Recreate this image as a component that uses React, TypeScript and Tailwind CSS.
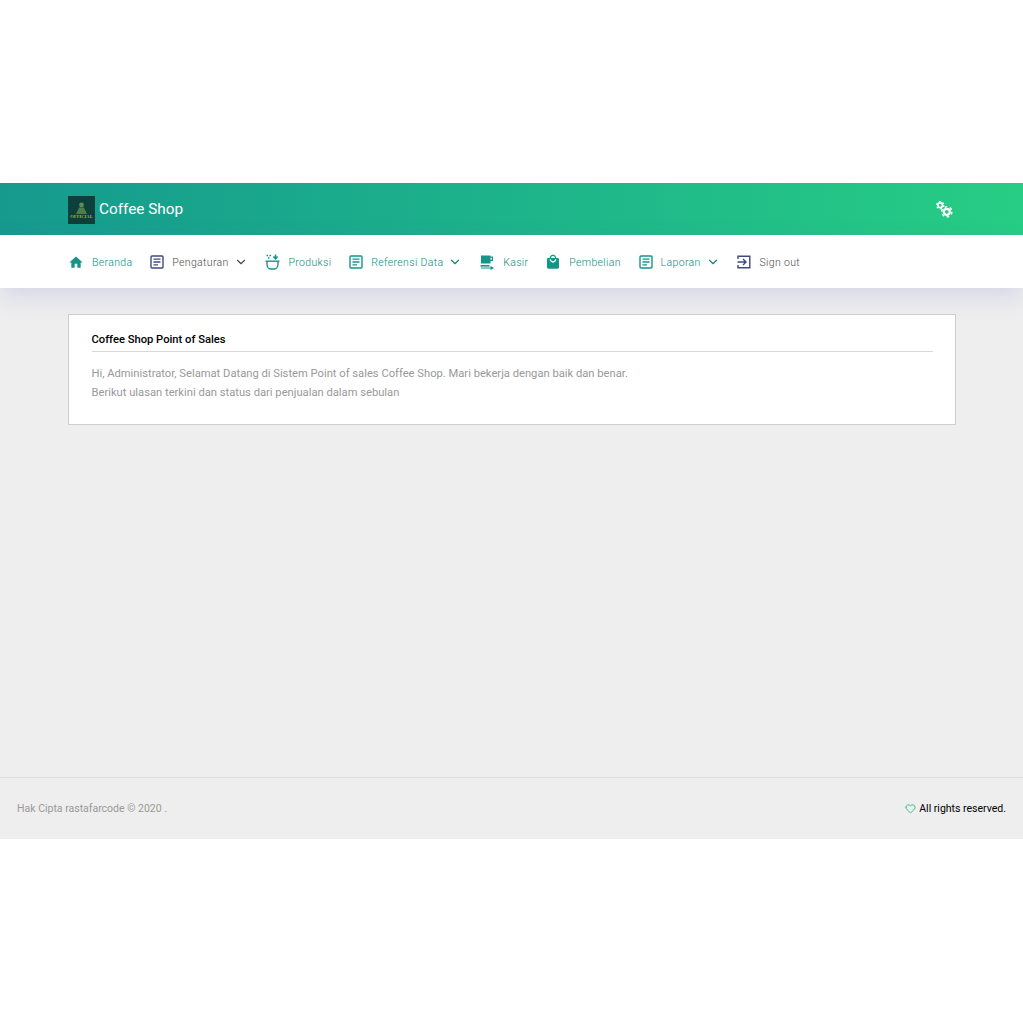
import type { ReactNode } from 'react';
import { ChevronDown, Heart } from 'lucide-react';
import { MdHome, MdLocalMall } from 'react-icons/md';

const TEAL = 'text-[#14958a]';
const NAVY = 'text-[#3f4a7d]';

function DocIcon({ className }: { className: string }) {
  return (
    <svg width="14" height="14" viewBox="0 0 14 14" fill="none" className={className}>
      <rect x="1" y="1" width="12" height="12" rx="1" stroke="currentColor" strokeWidth="1.4" />
      <path d="M3.5 4.2h7M3.5 7h7M3.5 9.8h4.5" stroke="currentColor" strokeWidth="1.3" />
    </svg>
  );
}

function BowlIcon() {
  return (
    <svg width="15" height="16" viewBox="0 0 15 16" fill="none" className={TEAL}>
      <path d="M1.5 1.5h1.5M4.5 1.5h1.5M3 4h1.5" stroke="currentColor" strokeWidth="1.3" />
      <path d="M10.5 0.5v3.2M8.4 2.6l2.1 2.2 2.1-2.2" stroke="currentColor" strokeWidth="1.5" />
      <path d="M0.5 7.2h14" stroke="currentColor" strokeWidth="1.4" />
      <path d="M2 7.5v2.5c0 2.8 1.6 5 3.5 5h4c1.9 0 3.5-2.2 3.5-5V7.5" stroke="currentColor" strokeWidth="1.4" />
    </svg>
  );
}

function CupIcon() {
  return (
    <svg width="15" height="15" viewBox="0 0 15 15" className={TEAL} fill="currentColor">
      <path d="M1 0.5h9.5v1h2.5v4.5h-2.5v2.5H1zM10.5 2.7v2.1h1.3V2.7z" />
      <path d="M0.5 10h9v1.6h-9z" />
      <path d="M1 12.6h9.5v-1.5l3.5 2-3.5 1.9v-1.4H1z" />
    </svg>
  );
}

function SignOutIcon() {
  return (
    <svg width="14" height="14" viewBox="0 0 14 14" fill="none" className={NAVY}>
      <path d="M1 4V1.2h11.8v11.6H1V10" stroke="currentColor" strokeWidth="1.4" />
      <path d="M0.5 7h8M6 4l3 3-3 3" stroke="currentColor" strokeWidth="1.4" />
    </svg>
  );
}

function GearsIcon() {
  return (
    <svg width="17" height="17" viewBox="0 0 17 17" fill="none" className="text-white">
      <circle cx="4.2" cy="4.2" r="2.3" stroke="currentColor" strokeWidth="1.6" />
      <circle cx="4.2" cy="4.2" r="3.6" stroke="currentColor" strokeWidth="1.3" strokeDasharray="1.9 1.9" />
      <circle cx="10.8" cy="10.8" r="3" stroke="currentColor" strokeWidth="2.2" />
      <circle cx="10.8" cy="10.8" r="5" stroke="currentColor" strokeWidth="1.6" strokeDasharray="2.6 2.6" />
    </svg>
  );
}

function NavItem({
  icon,
  label,
  color,
  caret,
  gap = 'gap-[7px]',
}: {
  icon: ReactNode;
  label: string;
  color: string;
  caret?: boolean;
  gap?: string;
}) {
  return (
    <a className={`flex items-center ${gap}`}>
      <span className="flex w-[16px] justify-center">{icon}</span>
      <span className={`pt-[1px] text-[10.5px] font-light tracking-[0.35px] ${color}`}>{label}</span>
      {caret && <ChevronDown size={14} strokeWidth={2} className={`ml-[-2px] ${color}`} />}
    </a>
  );
}

export default function App() {
  return (
    <div className="min-h-[1023px] bg-white font-['Roboto',sans-serif]">
      <div className="h-[183px]" />

      <header className="flex h-[52px] items-center justify-between bg-gradient-to-r from-[#169a8e] to-[#27cd84] pl-[68px] pr-[70px] pt-[1px]">
        <div className="flex items-center gap-[4px]">
          <svg width="27" height="28" viewBox="0 0 27 28">
            <rect width="27" height="28" fill="#0d3f3c" />
            <circle cx="13.5" cy="9" r="2.4" fill="#5d8a55" />
            <path d="M8 18l3-6.5h5l3 6.5z" fill="#4e7d4b" />
            <text x="13.5" y="22" textAnchor="middle" fontSize="4.6" fontWeight="700" fill="#a9b422" fontFamily="'Liberation Serif', serif">
              OFFICIAL
            </text>
          </svg>
          <span className="text-[15.3px] text-white">Coffee Shop</span>
        </div>
        <GearsIcon />
      </header>

      <nav className="relative flex h-[53px] items-center gap-[16.75px] bg-white pl-[68px] pt-[1px] shadow-[0_8px_24px_rgba(90,90,190,0.16)]">
        <NavItem icon={<MdHome size={17} className={TEAL} />} label="Beranda" color="text-[#0f8a80]" gap="gap-[8px]" />
        <NavItem icon={<DocIcon className={NAVY} />} label="Pengaturan" color="text-[#4a4a4a]" caret />
        <NavItem icon={<BowlIcon />} label="Produksi" color="text-[#0f8a80]" gap="gap-[8px]" />
        <NavItem icon={<DocIcon className={TEAL} />} label="Referensi Data" color="text-[#0f8a80]" caret />
        <NavItem icon={<CupIcon />} label="Kasir" color="text-[#0f8a80]" gap="gap-[8px]" />
        <NavItem icon={<MdLocalMall size={16} className={TEAL} />} label="Pembelian" color="text-[#0f8a80]" gap="gap-[8px]" />
        <NavItem icon={<DocIcon className={TEAL} />} label="Laporan" color="text-[#0f8a80]" caret />
        <NavItem icon={<SignOutIcon />} label="Sign out" color="text-[#4a4a4a]" />
      </nav>

      <main className="h-[489px] bg-[#eeeeee] px-[68px] pt-[26px]">
        <section className="h-[111px] w-[888px] border border-[#cfcfcf] bg-white px-[22.5px] pt-[17px]">
          <h4 className="border-b border-[#d8d8d8] pb-[4px] text-[11.2px] font-medium leading-[15px] text-black">
            Coffee Shop Point of Sales
          </h4>
          <p className="mt-[12px] text-[11.2px] leading-[19px] text-[#999999]">
            Hi, Administrator, Selamat Datang di Sistem Point of sales Coffee Shop. Mari bekerja dengan baik dan benar.
            <br />
            Berikut ulasan terkini dan status dari penjualan dalam sebulan
          </p>
        </section>
      </main>

      <footer className="flex h-[62px] items-center justify-between border-t border-[#dcdcdc] bg-[#eeeeee] px-[17px] pt-[1px] text-[10.5px]">
        <span className="text-[#999999]">Hak Cipta rastafarcode © 2020 .</span>
        <span className="flex items-center gap-[3px] text-black">
          <Heart size={11} strokeWidth={2} className="mt-[-1px] text-[#27b98a]" />
          All rights reserved.
        </span>
      </footer>
    </div>
  );
}
